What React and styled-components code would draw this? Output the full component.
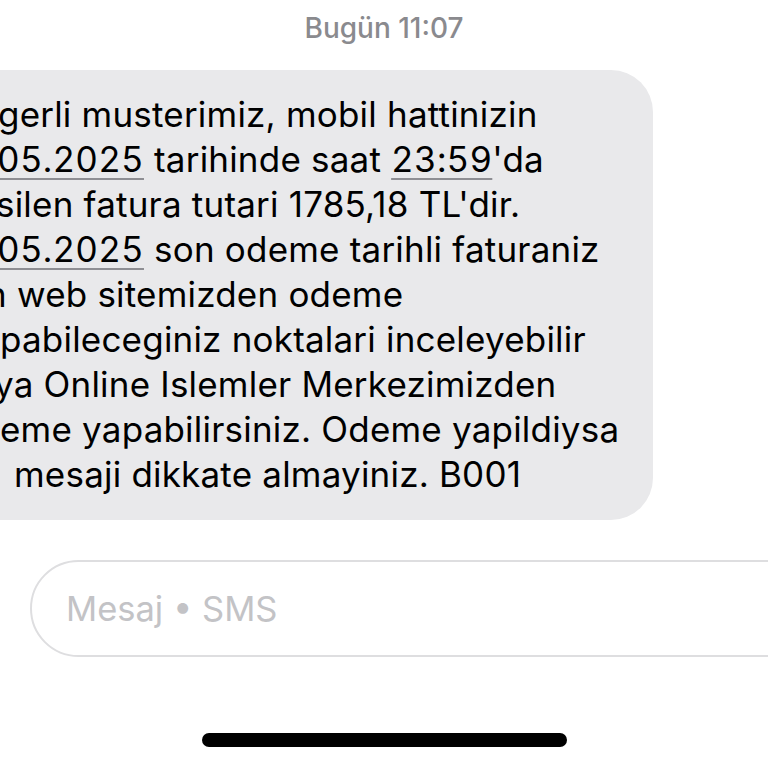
import React from 'react';
import styled, { createGlobalStyle } from 'styled-components';

const GlobalStyle = createGlobalStyle`
  html, body {
    margin: 0;
    padding: 0;
    background: #fff;
    overflow: hidden;
  }
  body {
    font-family: Inter, "Noto Sans", "Liberation Sans", sans-serif;
    -webkit-font-smoothing: antialiased;
  }
`;

const Screen = styled.div`
  width: 768px;
  height: 768px;
  display: flex;
  flex-direction: column;
  overflow: hidden;
  background: #fff;
`;

const Stamp = styled.div`
  padding-top: 10px;
  text-align: center;
  font-size: 28px;
  line-height: 36px;
  font-weight: 500;
  color: #8a8a8e;
`;

/* bubble starts off screen on the left, the picture is cropped */
const Bubble = styled.div`
  margin-top: 24px;
  margin-left: -60px;
  width: 713px;
  box-sizing: border-box;
  padding: 22px 0 23px 60px;
  background: #e9e9eb;
  border-radius: 42px;
  overflow: hidden;
`;

const Line = styled.div`
  margin-left: ${(p) => p.$shift || 0}px;
  font-size: 35px;
  line-height: 45px;
  letter-spacing: 0.2px;
  color: #000;
  white-space: nowrap;
`;

const Link = styled.span`
  font-variant-numeric: tabular-nums;
  text-decoration: underline;
  text-decoration-color: #8e8e93;
  text-decoration-thickness: 2px;
  text-underline-offset: 6px;
`;

const Composer = styled.div`
  margin-top: 40px;
  margin-left: 30px;
  width: 800px;
  height: 97px;
  box-sizing: border-box;
  border: 2px solid #dedee0;
  border-radius: 49px;
  display: flex;
  align-items: center;
  padding-left: 34px;
`;

const Placeholder = styled.span`
  font-size: 34.5px;
  color: #c3c3c6;
`;

const HomeBar = styled.div`
  margin: 76px auto 0;
  width: 365px;
  height: 14px;
  border-radius: 7px;
  background: #000;
`;

export default function App() {
  return (
    <>
      <GlobalStyle />
      <Screen>
        <Stamp>Bugün 11:07</Stamp>
        <Bubble>
          <Line $shift={-2}>gerli musterimiz, mobil hattinizin</Line>
          <Line $shift={-3}>
            <Link>05.2025</Link> tarihinde saat <Link>23:59</Link>'da
          </Line>
          <Line $shift={-4}>silen fatura tutari 1785,18 TL'dir.</Line>
          <Line $shift={-3}>
            <Link>05.2025</Link> son odeme tarihli faturaniz
          </Line>
          <Line $shift={-14}>n web sitemizden odeme</Line>
          <Line $shift={0}>pabileceginiz noktalari inceleyebilir</Line>
          <Line $shift={-6}>ya Online Islemler Merkezimizden</Line>
          <Line $shift={0}>eme yapabilirsiniz. Odeme yapildiysa</Line>
          <Line $shift={14}>mesaji dikkate almayiniz. B001</Line>
        </Bubble>
        <Composer>
          <Placeholder>Mesaj • SMS</Placeholder>
        </Composer>
        <HomeBar />
      </Screen>
    </>
  );
}
